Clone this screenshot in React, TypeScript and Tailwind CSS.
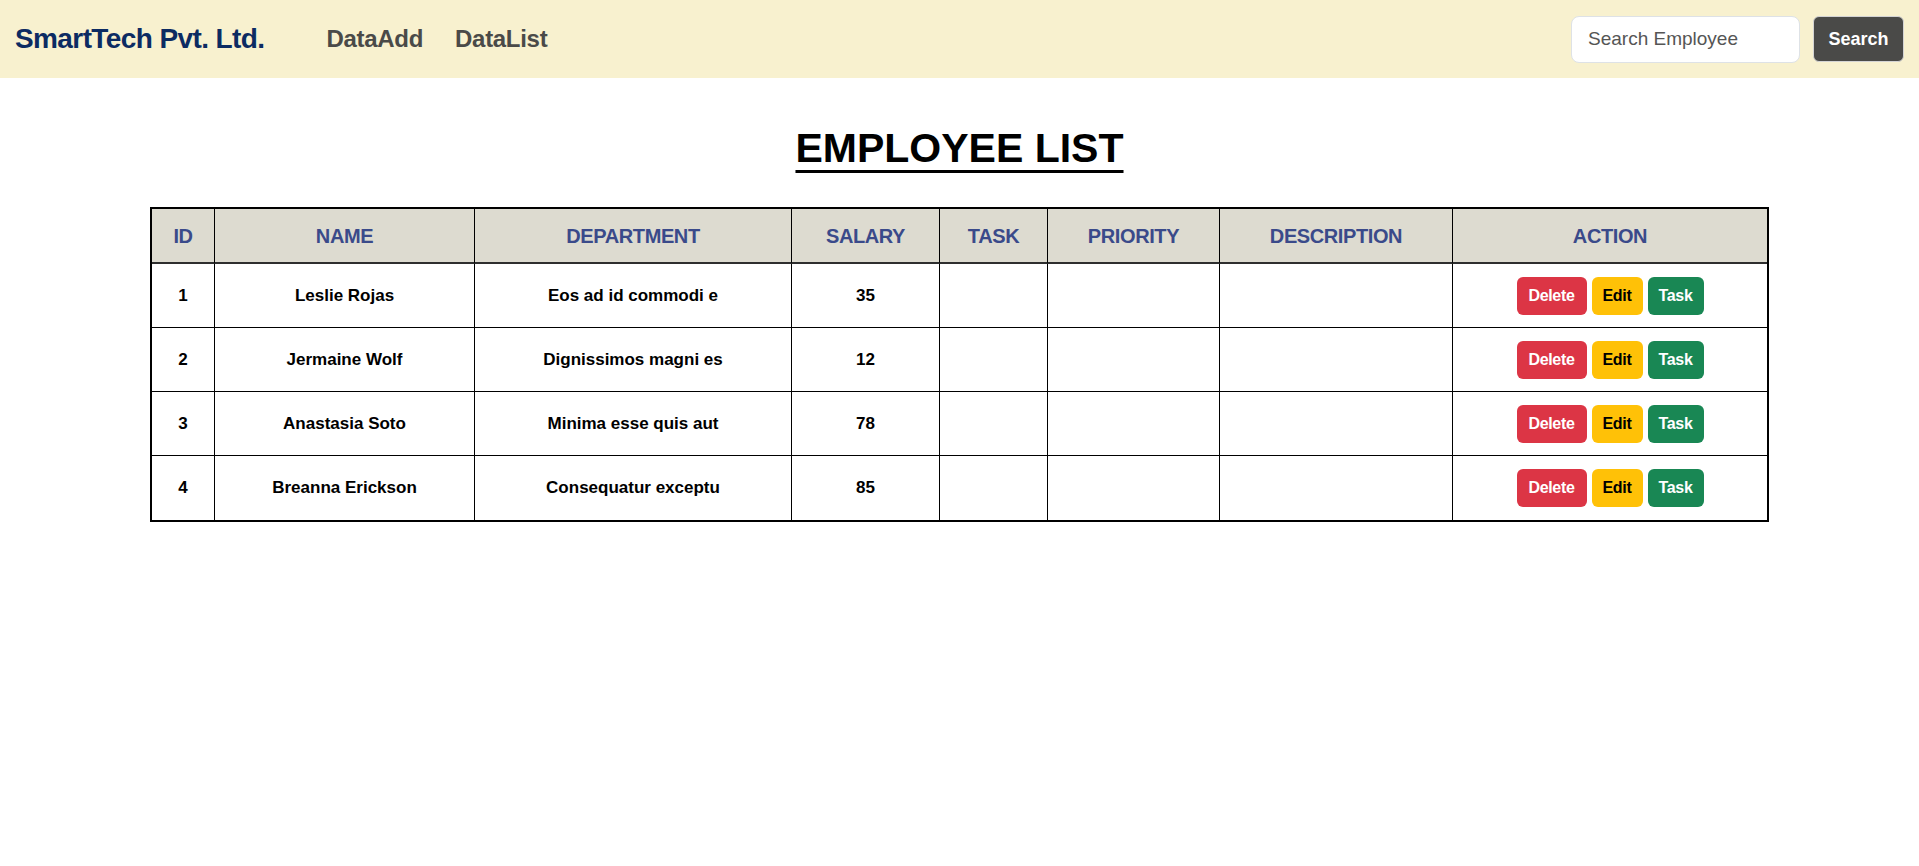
import React from "react";

const rows = [
  { id: 1, name: "Leslie Rojas", dept: "Eos ad id commodi e", salary: 35 },
  { id: 2, name: "Jermaine Wolf", dept: "Dignissimos magni es", salary: 12 },
  { id: 3, name: "Anastasia Soto", dept: "Minima esse quis aut", salary: 78 },
  { id: 4, name: "Breanna Erickson", dept: "Consequatur exceptu", salary: 85 },
];

const headers = ["ID", "NAME", "DEPARTMENT", "SALARY", "TASK", "PRIORITY", "DESCRIPTION", "ACTION"];
const widths = ["w-[63px]", "w-[260px]", "w-[317px]", "w-[148px]", "w-[108px]", "w-[172px]", "w-[233px]", "w-[314px]"];

export default function App() {
  const td = "border-r border-b border-black text-center align-middle text-[17px] font-bold text-black";
  return (
    <div className="min-h-[866px] bg-white font-['Liberation_Sans',Arial,sans-serif]">
      <nav className="h-[78px] bg-[#f8f1cf] flex items-center pl-[15px] pr-[15px]">
        <span className="text-[28px] font-bold tracking-[-0.6px] text-[#0c2b62]">SmartTech Pvt. Ltd.</span>
        <span className="ml-[62px] text-[24px] font-bold tracking-[-0.3px] text-[#4a4a48]">DataAdd</span>
        <span className="ml-[32px] text-[24px] font-bold tracking-[-0.3px] text-[#4a4a48]">DataList</span>
        <div className="ml-auto flex items-center gap-[13px]">
          <input
            placeholder="Search Employee"
            className="w-[229px] h-[47px] rounded-[8px] border border-[#dee2e6] bg-white px-[16px] text-[19px] text-[#333] placeholder:text-[#555] outline-none"
          />
          <button className="w-[91px] h-[46px] rounded-[6px] border border-[#d4d4d4] bg-[#4a4a48] text-white text-[18px] font-bold">
            Search
          </button>
        </div>
      </nav>

      <div className="pt-[46px] flex justify-center">
        <h1 className="text-[41px] leading-[48px] font-bold text-black underline decoration-[3px] underline-offset-[8px]">
          EMPLOYEE LIST
        </h1>
      </div>

      <div className="mt-[35px] flex justify-center">
        <table className="w-[1619px] table-fixed border-separate border-spacing-0 border-2 border-black">
          <colgroup>
            {widths.map((w, i) => (
              <col key={i} className={w} />
            ))}
          </colgroup>
          <thead>
            <tr className="h-[55px]">
              {headers.map((h, i) => (
                <th
                  key={h}
                  className={
                    i === headers.length - 1
                      ? "bg-[#dddbd0] border-b-2 border-b-[#2e2e2e] text-center align-middle text-[20px] font-bold tracking-[-0.4px] text-[#3a4a8a]"
                      : "bg-[#dddbd0] border-r border-r-black border-b-2 border-b-[#2e2e2e] text-center align-middle text-[20px] font-bold tracking-[-0.4px] text-[#3a4a8a]"
                  }
                >
                  {h}
                </th>
              ))}
            </tr>
          </thead>
          <tbody>
            {rows.map((r, ri) => {
              const last = ri === rows.length - 1;
              const cell = last ? "border-r border-black text-center align-middle text-[17px] font-bold text-black" : td;
              return (
                <tr key={r.id} className="h-[64px]">
                  <td className={cell}>{r.id}</td>
                  <td className={cell}>{r.name}</td>
                  <td className={cell}>{r.dept}</td>
                  <td className={cell}>{r.salary}</td>
                  <td className={cell}></td>
                  <td className={cell}></td>
                  <td className={cell}></td>
                  <td className={last ? "align-middle" : "border-b border-black align-middle"}>
                    <div className="flex justify-center gap-[5px]">
                      <button className="h-[38px] w-[70px] rounded-[6px] bg-[#dc3545] text-white text-[16px] font-bold tracking-[-0.3px]">
                        Delete
                      </button>
                      <button className="h-[38px] w-[51px] rounded-[6px] bg-[#ffc107] text-black text-[16px] font-bold tracking-[-0.3px]">
                        Edit
                      </button>
                      <button className="h-[38px] w-[56px] rounded-[6px] bg-[#198754] text-white text-[16px] font-bold tracking-[-0.3px]">
                        Task
                      </button>
                    </div>
                  </td>
                </tr>
              );
            })}
          </tbody>
        </table>
      </div>
    </div>
  );
}
